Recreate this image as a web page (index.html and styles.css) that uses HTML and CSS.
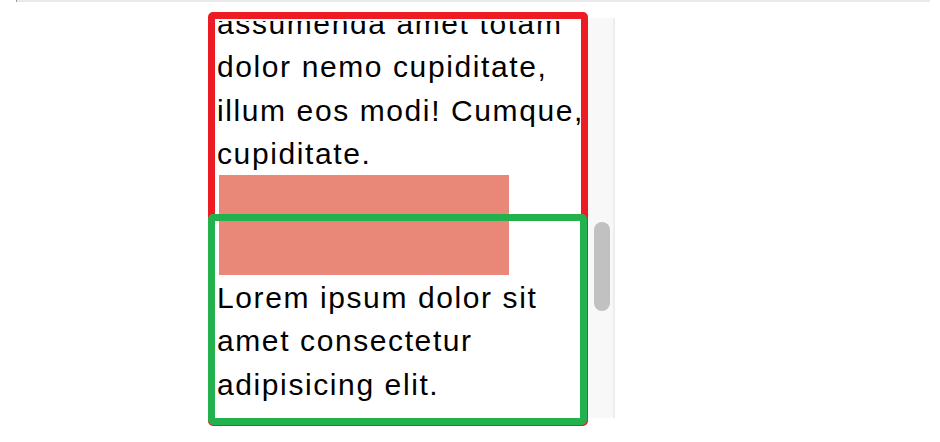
FILE: index.html
```html
<!DOCTYPE html>
<html lang="en">
<head>
<meta charset="utf-8">
<title>Scroll demo</title>
<link rel="stylesheet" href="styles.css">
</head>
<body>
<div class="topline"></div>
<div class="stage">
  <div class="frame frame-red"></div>
  <div class="scroller">
    <div class="content">
      <p class="text">Lorem ipsum dolor sit amet consectetur adipisicing elit. Necessitatibus, assumenda amet totam dolor nemo cupiditate, illum eos modi! Cumque, cupiditate.</p>
      <div class="block"></div>
      <p class="text">Lorem ipsum dolor sit amet consectetur adipisicing elit.</p>
    </div>
    <div class="track"><div class="thumb"></div></div>
  </div>
  <div class="frame frame-green"></div>
</div>
</body>
</html>
```
FILE: styles.css
```css
html, body {
  margin: 0;
  padding: 0;
  background: #ffffff;
}

body {
  font-family: "Liberation Sans", Arial, sans-serif;
  color: #000000;
  min-height: 442px;
}

.topline {
  height: 2px;
  margin: 0 10px 0 16px;
  background: #e9e9e9;
  border-left: 1px solid #9a9a9a;
}

.stage {
  position: relative;
  width: 407px;
  margin: 16px 0 24px 208px;
}

.scroller {
  position: relative;
  z-index: 1;
  display: flex;
  height: 400px;
  overflow: hidden;
}

.content {
  flex: 1;
  min-width: 0;
  display: flex;
  flex-direction: column;
  justify-content: flex-end;
  margin-top: 3px;
  padding: 0 0 12px 9px;
  overflow: hidden;
}

.text {
  margin: 0;
  font-size: 30px;
  line-height: 43.3px;
  letter-spacing: 1.6px;
}

.block {
  flex: none;
  width: 290px;
  height: 100px;
  margin: 0 0 1px 2px;
  background: #e98878;
}

.track {
  flex: none;
  width: 27px;
  padding: 204px 0 0 0;
  box-sizing: border-box;
  background: #f8f8f8;
  border-right: 2px solid #ededed;
}

.thumb {
  width: 16px;
  height: 89px;
  margin-left: 6px;
  border-radius: 8px;
  background: #c1c1c1;
}

.frame {
  position: absolute;
  left: 0;
  box-sizing: border-box;
  border-radius: 5px;
}

.frame-red {
  z-index: 0;
  top: -6px;
  width: 380px;
  height: 414px;
  border: 7px solid #ed1c24;
}

.frame-green {
  z-index: 2;
  top: 196px;
  width: 379px;
  height: 211px;
  border: 7px solid #22b14c;
}
```
